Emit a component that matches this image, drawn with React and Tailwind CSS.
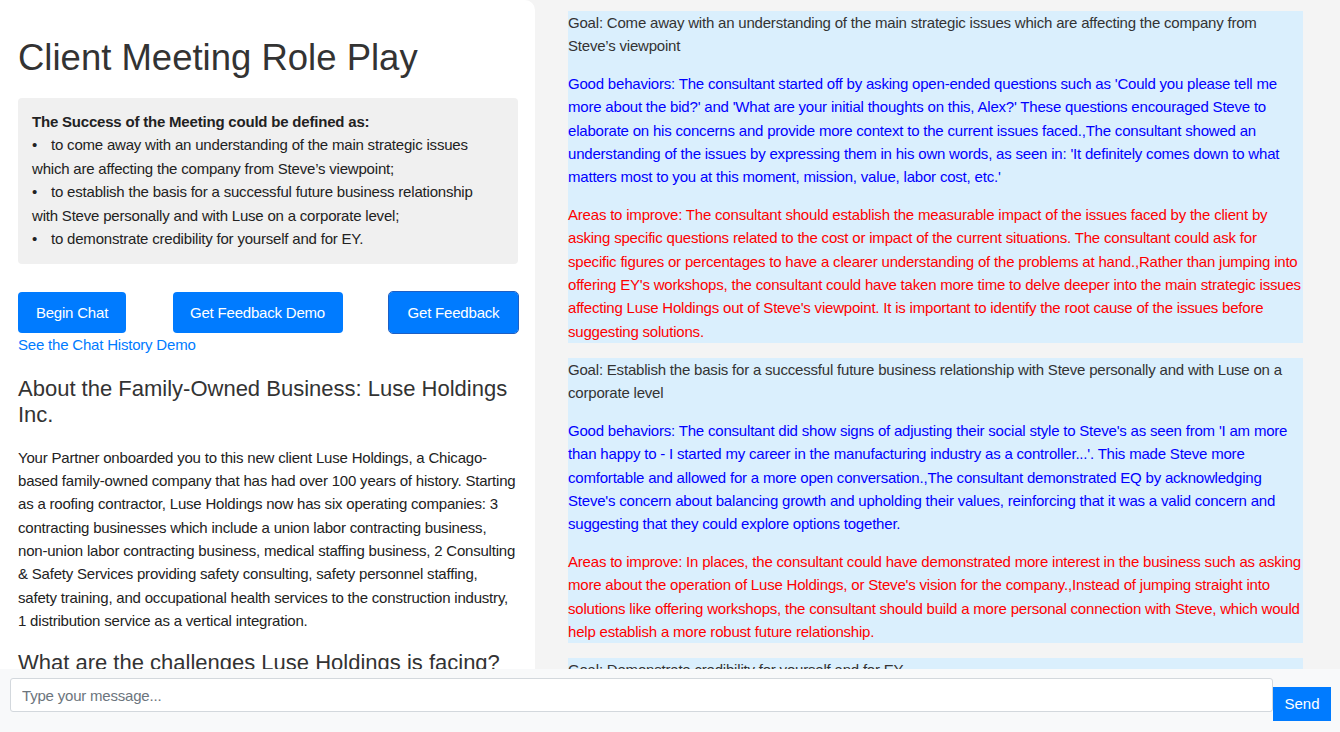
import React from "react";

const feedback = [
  {
    goal: "Goal: Come away with an understanding of the main strategic issues which are affecting the company from Steve’s viewpoint",
    good: "Good behaviors: The consultant started off by asking open-ended questions such as 'Could you please tell me more about the bid?' and 'What are your initial thoughts on this, Alex?' These questions encouraged Steve to elaborate on his concerns and provide more context to the current issues faced.,The consultant showed an understanding of the issues by expressing them in his own words, as seen in: 'It definitely comes down to what matters most to you at this moment, mission, value, labor cost, etc.'",
    improve: "Areas to improve: The consultant should establish the measurable impact of the issues faced by the client by asking specific questions related to the cost or impact of the current situations. The consultant could ask for specific figures or percentages to have a clearer understanding of the problems at hand.,Rather than jumping into offering EY's workshops, the consultant could have taken more time to delve deeper into the main strategic issues affecting Luse Holdings out of Steve's viewpoint. It is important to identify the root cause of the issues before suggesting solutions.",
  },
  {
    goal: "Goal: Establish the basis for a successful future business relationship with Steve personally and with Luse on a corporate level",
    good: "Good behaviors: The consultant did show signs of adjusting their social style to Steve's as seen from 'I am more than happy to - I started my career in the manufacturing industry as a controller...'. This made Steve more comfortable and allowed for a more open conversation.,The consultant demonstrated EQ by acknowledging Steve's concern about balancing growth and upholding their values, reinforcing that it was a valid concern and suggesting that they could explore options together.",
    improve: "Areas to improve: In places, the consultant could have demonstrated more interest in the business such as asking more about the operation of Luse Holdings, or Steve's vision for the company.,Instead of jumping straight into solutions like offering workshops, the consultant should build a more personal connection with Steve, which would help establish a more robust future relationship.",
  },
  {
    goal: "Goal: Demonstrate credibility for yourself and for EY",
    good: "",
    improve: "",
  },
];

const bullets = [
  "to come away with an understanding of the main strategic issues which are affecting the company from Steve’s viewpoint;",
  "to establish the basis for a successful future business relationship with Steve personally and with Luse on a corporate level;",
  "to demonstrate credibility for yourself and for EY.",
];

export default function App() {
  return (
    <div className="h-screen flex flex-col overflow-hidden bg-[#f4f4f4] font-['Liberation_Sans',Arial,sans-serif] text-[15px] leading-[23.3px] tracking-[-0.2px]">
      <div className="flex flex-1 min-h-0">
        {/* Left: scenario */}
        <div className="w-[535px] shrink-0 overflow-hidden bg-white rounded-tr-[10px] pl-[18px] pr-[17px] pt-[36px]">
          <h1 className="text-[36.5px] leading-[43px] tracking-normal text-[#333]">Client Meeting Role Play</h1>

          <div className="mt-[19px] bg-[#f0f0f0] rounded-[4px] pl-[14px] pr-[20px] pt-[12px] pb-[14px] text-[#222] leading-[23.4px]">
            <p className="font-bold">The Success of the Meeting could be defined as:</p>
            {bullets.map((b) => (
              <p key={b}>
                <span className="inline-block w-[19px]">•</span>
                {b}
              </p>
            ))}
          </div>

          <div className="mt-[28px] flex justify-between items-center">
            <button className="w-[108px] h-[41px] rounded-[4px] bg-[#007bff] text-white">Begin Chat</button>
            <button className="w-[170px] h-[41px] rounded-[4px] bg-[#007bff] text-white">Get Feedback Demo</button>
            <button className="w-[129px] h-[41px] rounded-[4px] bg-[#007bff] text-white outline outline-1 outline-[#1d5fc4]">Get Feedback</button>
          </div>
          <a className="block text-[#007bff]">See the Chat History Demo</a>

          <h3 className="mt-[19px] text-[22px] leading-[26px] tracking-normal text-[#333]">About the Family-Owned Business: Luse Holdings Inc.</h3>
          <p className="mt-[18px] text-[#222]">
            Your Partner onboarded you to this new client Luse Holdings, a Chicago-based family-owned company that has had over 100 years of history. Starting as a roofing contractor, Luse Holdings now has six operating companies: 3 contracting businesses which include a union labor contracting business, non-union labor contracting business, medical staffing business, 2 Consulting &amp; Safety Services providing safety consulting, safety personnel staffing, safety training, and occupational health services to the construction industry, 1 distribution service as a vertical integration.
          </p>
          <h3 className="mt-[18px] text-[22px] leading-[26px] tracking-normal text-[#333]">What are the challenges Luse Holdings is facing?</h3>
        </div>

        {/* Right: feedback */}
        <div className="flex-1 overflow-hidden pl-[33px] pt-[11px]">
          <div className="flex flex-col gap-[15px] w-[735px]">
            {feedback.map((f) => (
              <div key={f.goal} className="bg-[#daeffd] min-h-[60px]">
                <p className="text-[#333]">{f.goal}</p>
                {f.good && <p className="mt-[14.5px] text-[#0000ff]">{f.good}</p>}
                {f.improve && <p className="mt-[14.5px] text-[#ff0000]">{f.improve}</p>}
              </div>
            ))}
          </div>
        </div>
      </div>

      {/* Chat input */}
      <div className="h-[63px] shrink-0 bg-[#f8f9fa] flex items-start pl-[10px] pr-[9px] pt-[9px]">
        <input
          type="text"
          placeholder="Type your message..."
          className="flex-1 h-[34px] bg-white border border-[#d3d8dd] rounded-[3px] pl-[11px] text-[15px] leading-normal text-[#222] placeholder:text-[#6c757d] outline-none"
        />
        <button className="w-[58px] h-[34px] mt-[9px] bg-[#007bff] text-white text-[15px] tracking-normal">Send</button>
      </div>
    </div>
  );
}
